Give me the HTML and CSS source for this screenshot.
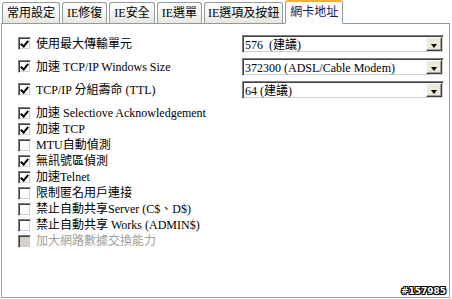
FILE: index.html
```html
<!DOCTYPE html>
<html>
<head>
<meta charset="utf-8">
<link rel="stylesheet" href="styles.css">
</head>
<body>
<div class="win">
  <div class="tabs">
    <div class="tab">常用設定</div>
    <div class="tab">IE修復</div>
    <div class="tab">IE安全</div>
    <div class="tab">IE選單</div>
    <div class="tab">IE選項及按鈕</div>
    <div class="tab active">網卡地址</div>
  </div>
  <div class="panel">
    <div class="top">
      <div class="row big"><span class="cb on"></span><span class="lbl">使用最大傳輸單元</span></div>
      <div class="sel"><span class="val">576&nbsp; (建議)</span><span class="btn"></span></div>
      <div class="row big"><span class="cb on"></span><span class="lbl">加速 TCP/IP Windows Size</span></div>
      <div class="sel"><span class="val">372300 (ADSL/Cable Modem)</span><span class="btn"></span></div>
      <div class="row big"><span class="cb on"></span><span class="lbl">TCP/IP 分組壽命 (TTL)</span></div>
      <div class="sel"><span class="val">64 (建議)</span><span class="btn"></span></div>
    </div>
    <div class="list">
      <div class="row"><span class="cb on"></span><span class="lbl">加速 Selectiove Acknowledgement</span></div>
      <div class="row"><span class="cb on"></span><span class="lbl">加速 TCP</span></div>
      <div class="row"><span class="cb"></span><span class="lbl">MTU自動偵測</span></div>
      <div class="row"><span class="cb on"></span><span class="lbl">無訊號區偵測</span></div>
      <div class="row"><span class="cb on"></span><span class="lbl">加速Telnet</span></div>
      <div class="row"><span class="cb"></span><span class="lbl">限制匿名用戶連接</span></div>
      <div class="row"><span class="cb"></span><span class="lbl">禁止自動共享Server (C$、D$)</span></div>
      <div class="row"><span class="cb"></span><span class="lbl">禁止自動共享 Works (ADMIN$)</span></div>
      <div class="row disabled"><span class="cb"></span><span class="lbl">加大網路數據交換能力</span></div>
    </div>
  </div>
  <div class="mark">#157985</div>
</div>
</body>
</html>
```
FILE: styles.css
```css
html, body {
  margin: 0;
  padding: 0;
  background: #ffffff;
}
.win {
  position: relative;
  width: 452px;
  height: 299px;
  font-family: "Liberation Serif", "Noto Sans CJK TC", serif;
  font-size: 12px;
  color: #000;
}
.tabs {
  display: flex;
  align-items: flex-end;
  height: 23px;
  padding-left: 2px;
  gap: 2px;
  position: relative;
  z-index: 1;
}
.tab {
  height: 20px;
  line-height: 20px;
  padding: 0 4px;
  border: 1px solid #919b9c;
  border-bottom: none;
  border-radius: 3px 3px 0 0;
  background: linear-gradient(#ffffff, #f3f3ef 60%, #e6e6de);
  white-space: nowrap;
  box-sizing: content-box;
}
.tab:nth-child(5) {
  padding: 0 3px;
}
.tab.active {
  height: 21px;
  line-height: 20px;
  padding: 0 4px;
  background: #fcfcfe;
  border-top: 2px solid #f0b040;
  border-bottom: 1px solid #fcfcfe;
  margin-bottom: -1px;
  color: #1a1a4a;
}
.panel {
  box-sizing: border-box;
  width: 449px;
  height: 275px;
  margin-left: 1px;
  border: 1px solid #a0a0a0;
  border-top: 1px solid #919b9c;
  padding: 8px 6px 0 16px;
}
.top {
  display: grid;
  grid-template-columns: 224px 202px;
  grid-auto-rows: 23px;
  align-items: center;
}
.row {
  display: flex;
  align-items: center;
  height: 16px;
  white-space: nowrap;
}
.row.big {
  height: 23px;
}
.list {
  margin-top: 4px;
}
.cb {
  box-sizing: border-box;
  width: 13px;
  height: 13px;
  border-top: 1px solid #808080;
  border-left: 1px solid #808080;
  border-right: 1px solid #ffffff;
  border-bottom: 1px solid #ffffff;
  box-shadow: inset 1px 1px 0 #404040, inset -1px -1px 0 #d4d0c8;
  background: #ffffff;
  position: relative;
  flex: none;
}
.cb.on::after {
  content: "";
  position: absolute;
  left: 3px;
  top: 1px;
  width: 3px;
  height: 6px;
  border-right: 2px solid #000;
  border-bottom: 2px solid #000;
  transform: rotate(40deg);
}
.row.disabled .cb {
  background: #d4d0c8;
}
.row.disabled .lbl {
  color: #a0a0a0;
}
.lbl {
  margin-left: 5px;
  line-height: 16px;
}
.sel {
  box-sizing: border-box;
  height: 18px;
  display: flex;
  align-items: stretch;
  border-top: 1px solid #808080;
  border-left: 1px solid #808080;
  border-right: 1px solid #ffffff;
  border-bottom: 1px solid #ffffff;
  box-shadow: inset 1px 1px 0 #404040, inset -1px -1px 0 #d4d0c8;
  background: #ffffff;
  padding: 1px;
}
.val {
  flex: 1;
  line-height: 16px;
  padding-left: 1px;
  white-space: nowrap;
}
.btn {
  width: 16px;
  background: #ece9d8;
  box-sizing: border-box;
  border-top: 1px solid #ffffff;
  border-left: 1px solid #ffffff;
  border-right: 1px solid #404040;
  border-bottom: 1px solid #404040;
  box-shadow: inset -1px -1px 0 #a0a0a0;
  position: relative;
}
.btn::after {
  content: "";
  position: absolute;
  left: 4px;
  top: 6px;
  border-left: 3.5px solid transparent;
  border-right: 3.5px solid transparent;
  border-top: 4px solid #000;
}
.mark {
  position: absolute;
  right: 6px;
  bottom: 3px;
  font-family: "DejaVu Sans", sans-serif;
  font-size: 9px;
  font-weight: bold;
  color: #ffffff;
  text-shadow: 1px 0 0 #000, -1px 0 0 #000, 0 1px 0 #000, 0 -1px 0 #000, 1px 1px 0 #000, -1px -1px 0 #000, 1px -1px 0 #000, -1px 1px 0 #000;
}
```
